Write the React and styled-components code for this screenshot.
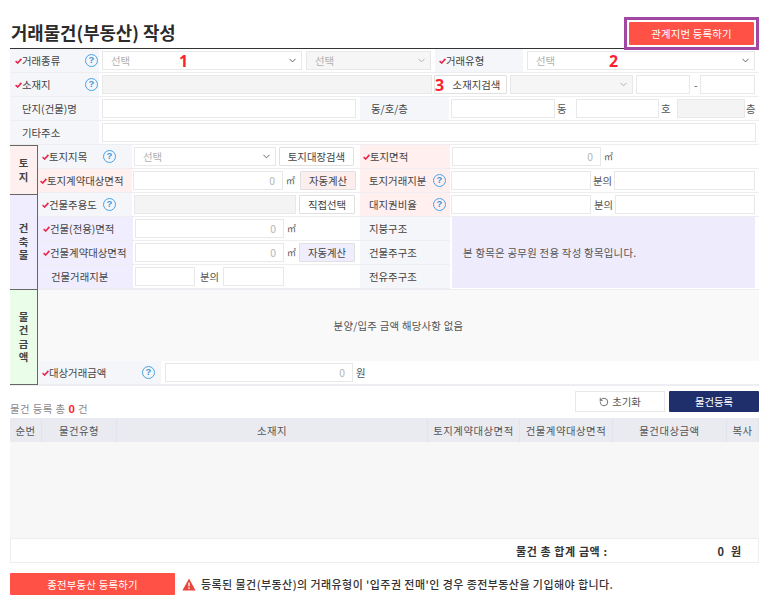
import React from "react";
import styled, { createGlobalStyle } from "styled-components";
import { ChevronDown, RotateCcw } from "lucide-react";

const Global = createGlobalStyle`
  html, body { margin: 0; padding: 0; background: #fff; }
  body { font-family: "Noto Sans CJK KR", "Noto Sans", sans-serif; font-size: 10.4px; color: #4a4a4a; }
  * { box-sizing: border-box; }
`;

const Page = styled.div`
  position: relative;
  width: 768px;
  height: 602px;
  padding: 0 9px 0 10px;
  overflow: hidden;
`;
const Header = styled.header`
  height: 49px;
  display: flex;
  align-items: flex-start;
  justify-content: space-between;
  border-bottom: 1px solid #333;
`;
const Title = styled.h1`
  margin: 21px 0 0 1px;
  font-size: 17.8px;
  line-height: 22px;
  font-weight: 700;
  color: #2b2b2b;
`;
const Highlight = styled.div`
  margin: 17px 0 0 0;
  width: 135px;
  height: 33px;
  border: 3px solid #a148a3;
  padding: 2px;
  background: #fff;
`;
const RedButton = styled.button`
  border: 0;
  padding: 0;
  font: inherit;
  color: #fff;
  background: #ff5145;
  border-radius: 1px;
  width: ${p => p.$w || "100%"};
  height: ${p => p.$h || "100%"};
  letter-spacing: 0.2px;
`;
const Row = styled.div`
  display: flex;
  align-items: center;
  height: ${p => p.$h || 24}px;
  border-bottom: 1px solid #eeeef2;
  background: ${p => p.$bg || "#fff"};
  flex: none;
`;
const Label = styled.div`
  position: relative;
  align-self: stretch;
  display: flex;
  align-items: center;
  flex: none;
  width: ${p => p.$w}px;
  padding-left: ${p => p.$pl ?? 12}px;
  background: ${p => p.$bg || "#f5f6fa"};
  margin-left: ${p => p.$ml || 0}px;
  margin-right: ${p => p.$mr ?? 2}px;
  white-space: nowrap;
  color: #444;
`;
const Check = styled.svg`
  width: 7px;
  height: 6px;
  margin-left: -7px;
  flex: none;
`;
const Req = () => (
  <Check viewBox="0 0 7 6"><path d="M.6 3.1 2.7 5 6.4.9" fill="none" stroke="#e8274b" strokeWidth="1.6" /></Check>
);
const HelpDot = styled.span`
  position: absolute;
  left: ${p => p.$x}px;
  top: 50%;
  margin-top: -6.5px;
  width: 13px;
  height: 13px;
  border-radius: 50%;
  border: 1.3px solid #4aa3e2;
  color: #3d96d8;
  font: 700 9.5px/10.5px "Liberation Sans", sans-serif;
  text-align: center;
`;
const Help = ({ x }) => <HelpDot $x={x}>?</HelpDot>;
const Input = styled.div`
  flex: none;
  width: ${p => p.$w}px;
  height: ${p => p.$h || 19}px;
  margin-left: ${p => p.$ml || 0}px;
  background: ${p => (p.$off ? "#f4f4f4" : "#fff")};
  border: 1px solid #e8e8e8;
  color: #b5b5b5;
  text-align: right;
  padding-right: 7px;
  line-height: 18px;
`;
const Select = styled.div`
  flex: none;
  display: flex;
  align-items: center;
  justify-content: space-between;
  width: ${p => p.$w}px;
  height: 19px;
  margin-left: ${p => p.$ml || 0}px;
  padding: 0 3px 0 8px;
  background: ${p => (p.$off ? "#f6f6f6" : "#fff")};
  border: 1px solid #e8e8e8;
  color: #b0b0b0;
  svg { color: ${p => (p.$off ? "#aaa" : "#555")}; }
`;
const Btn = styled.button`
  flex: none;
  font: inherit;
  color: #444;
  padding: 0 0 0 ${p => p.$pl || 0}px;
  width: ${p => p.$w}px;
  height: 19px;
  margin-left: ${p => p.$ml || 0}px;
  background: ${p => p.$bg || "#fff"};
  border: 1px solid #e0e0e0;
  border-radius: 1px;
`;
const Unit = styled.span`
  flex: none;
  margin-left: ${p => p.$ml || 0}px;
  width: ${p => p.$w || "auto"};
  color: #555;
  white-space: nowrap;
  font-size: ${p => p.$s || "10.4px"};
`;
const Body = styled.div`
  display: flex;
  height: 241px;
  border-bottom: 1px solid #eeeef2;
`;
const Tabs = styled.div`
  flex: none;
  width: 28px;
  display: flex;
  flex-direction: column;
  border-right: 1px solid #666;
  border-bottom: 1px solid #666;
`;
const Tab = styled.div`
  height: ${p => p.$h}px;
  display: flex;
  align-items: center;
  justify-content: center;
  text-align: center;
  font-weight: 700;
  line-height: 13.5px;
  color: #444;
  background: ${p => p.$bg};
  border-top: 1px solid #666;
`;
const Main = styled.div`
  flex: 1;
  display: flex;
  flex-direction: column;
`;
const Half = styled.div`
  display: flex;
  align-items: center;
  align-self: stretch;
  flex: none;
  width: ${p => p.$w}px;
`;
const Split = styled.div`
  display: flex;
  height: 72px;
`;
const Stack = styled.div`
  flex: none;
  width: ${p => p.$w}px;
  display: flex;
  flex-direction: column;
`;
const Notice = styled.div`
  flex: 1;
  margin: 0 4px 1px 2px;
  background: #eeebfc;
  display: flex;
  align-items: center;
  padding-left: 11px;
  color: #555;
  letter-spacing: 0.27px;
`;
const Empty = styled.div`
  height: 72px;
  display: flex;
  align-items: center;
  justify-content: center;
  background: #f9f9f9;
  border-top: 1px solid #eeeef2;
  color: #555;
  letter-spacing: 0.25px;
`;
const Actions = styled.div`
  display: flex;
  justify-content: flex-end;
  gap: 4px;
  margin-top: 5px;
  height: 21px;
`;
const GhostBtn = styled.button`
  width: 90px;
  padding: 0;
  font: inherit;
  color: #555;
  background: #fff;
  border: 1px solid #e8e8e8;
  display: flex;
  align-items: center;
  justify-content: center;
  gap: 3px;
`;
const NavyBtn = styled.button`
  width: 90px;
  padding: 0;
  font: inherit;
  color: #fff;
  background: #1f2f6b;
  border: 0;
  border-radius: 1px;
`;
const Count = styled.div`
  height: 16px;
  margin-top: -10px;
  color: #8a8a8a;
  line-height: 13px;
  letter-spacing: 0.45px;
  b { color: #ff1f2e; font-size: 11.5px; font-family: "Liberation Sans", sans-serif; }
`;
const TableHead = styled.div`
  display: grid;
  grid-template-columns: 32px 75px 311px 92px 93px 114px 32px;
  height: 24px;
  background: #e9ebf1;
`;
const Th = styled.div`
  display: flex;
  align-items: center;
  justify-content: center;
  color: #555;
  border-right: 1px solid #e2e4eb;
  white-space: nowrap;
  letter-spacing: 0.5px;
`;
const TableBody = styled.div`
  height: 97px;
  background: #f7f7f7;
  border-bottom: 1px solid #eee;
`;
const TotalRow = styled.div`
  height: 24px;
  display: flex;
  align-items: center;
  border: 1px solid #eee;
  border-top: 0;
  font-weight: 700;
  font-size: 11px;
  letter-spacing: 0.6px;
  color: #333;
  padding-left: 505px;
`;
const TotalValue = styled.span`
  margin-left: 110px;
  white-space: pre;
`;
const Footer = styled.div`
  display: flex;
  align-items: center;
  margin-top: 10px;
  height: 22px;
`;
const Warn = styled.div`
  display: flex;
  align-items: center;
  gap: 5px;
  margin-left: 7px;
  font-weight: 500;
  font-size: 11px;
  color: #333;
  letter-spacing: 0.43px;
  white-space: nowrap;
`;
const Mark = styled.span`
  position: absolute;
  left: ${p => p.$x}px;
  top: ${p => p.$y}px;
  color: #ff1f2e;
  font: 700 16px/16px "Noto Sans", sans-serif;
`;

export default function App() {
  return (
    <Page>
      <Global />
      <Header>
        <Title>거래물건(부동산) 작성</Title>
        <Highlight><RedButton>관계지번 등록하기</RedButton></Highlight>
      </Header>

      <Row>
        <Label $w={89} $mr={3}><Req />거래종류<Help x={75} /></Label>
        <Select $w={200}>선택<ChevronDown size={11} /></Select>
        <Select $w={125} $ml={4} $off>선택<ChevronDown size={11} /></Select>
        <Label $w={88} $ml={4} $mr={4} $pl={11}><Req />거래유형</Label>
        <Select $w={228}>선택<ChevronDown size={11} /></Select>
      </Row>
      <Row>
        <Label $w={89} $mr={3}><Req />소재지<Help x={75} /></Label>
        <Input $w={330} $off />
        <Btn $w={73} $ml={2} $pl={12}>소재지검색</Btn>
        <Select $w={123} $ml={3} $off><span /><ChevronDown size={11} /></Select>
        <Input $w={54} $ml={3} />
        <Unit $ml={4} $w="6px">-</Unit>
        <Input $w={55} />
      </Row>
      <Row>
        <Label $w={89} $mr={3}>단지(건물)명</Label>
        <Input $w={254} />
        <Label $w={89} $ml={4} $pl={11}>동/호/층</Label>
        <Input $w={104} />
        <Unit $ml={2} $w="19px">동</Unit>
        <Input $w={83} />
        <Unit $ml={2} $w="16px">호</Unit>
        <Input $w={68} $off />
        <Unit $ml={1}>층</Unit>
      </Row>
      <Row>
        <Label $w={89} $mr={3}>기타주소</Label>
        <Input $w={654} />
      </Row>

      <Body>
        <Tabs>
          <Tab $h={49} $bg="#fff0f0">토<br />지</Tab>
          <Tab $h={96} $bg="#f0eefe">건<br />축<br />물</Tab>
          <Tab $h={96} $bg="#eafde9">물<br />건<br />금<br />액</Tab>
        </Tabs>
        <Main>
          <Row>
            <Half $w={322}>
              <Label $w={94} $pl={11}><Req />토지지목<Help x={65} /></Label>
              <Select $w={142}>선택<ChevronDown size={11} /></Select>
              <Btn $w={75} $ml={3}>토지대장검색</Btn>
            </Half>
            <Label $w={90} $bg="#ffefef" $pl={10}><Req />토지면적</Label>
            <Input $w={149}>0</Input>
            <Unit $ml={3} $s="9px">㎡</Unit>
          </Row>
          <Row>
            <Half $w={322}>
              <Label $w={94} $mr={1} $bg="#ffefef" $pl={9}><Req />토지계약대상면적</Label>
              <Input $w={150}>0</Input>
              <Unit $ml={3} $w="14px" $s="9px">㎡</Unit>
              <Btn $w={56} $bg="#fdeeee">자동계산</Btn>
            </Half>
            <Label $w={90} $mr={1} $bg="#ffefef" $pl={9}>토지거래지분<Help x={73} /></Label>
            <Input $w={140} />
            <Unit $ml={2} $w="21px">분의</Unit>
            <Input $w={141} />
          </Row>
          <Row>
            <Half $w={322}>
              <Label $w={94} $pl={11}><Req />건물주용도<Help x={65} /></Label>
              <Input $w={162} $off />
              <Btn $w={56} $ml={3}>직접선택</Btn>
            </Half>
            <Label $w={90} $mr={1} $bg="#ffefef" $pl={9}>대지권비율<Help x={73} /></Label>
            <Input $w={140} />
            <Unit $ml={3} $w="21px">분의</Unit>
            <Input $w={140} />
          </Row>
          <Split>
            <Stack $w={322}>
              <Row>
                <Label $w={95} $bg="#f0eefe" $pl={12}><Req />건물(전용)면적</Label>
                <Input $w={149}>0</Input>
                <Unit $ml={3} $s="9px">㎡</Unit>
              </Row>
              <Row>
                <Label $w={95} $bg="#f0eefe" $pl={12}><Req />건물계약대상면적</Label>
                <Input $w={149}>0</Input>
                <Unit $ml={3} $w="12px" $s="9px">㎡</Unit>
                <Btn $w={56} $bg="#f0eefe">자동계산</Btn>
              </Row>
              <Row>
                <Label $w={95} $bg="#f0eefe" $pl={13}>건물거래지분</Label>
                <Input $w={60} />
                <Unit $ml={5} $w="23px">분의</Unit>
                <Input $w={61} />
              </Row>
            </Stack>
            <Stack $w={90}>
              <Row><Label $w={90} $mr={0} $pl={9}>지붕구조</Label></Row>
              <Row><Label $w={90} $mr={0} $pl={9}>건물주구조</Label></Row>
              <Row><Label $w={90} $mr={0} $pl={9}>전유주구조</Label></Row>
            </Stack>
            <Notice>본 항목은 공무원 전용 작성 항목입니다.</Notice>
          </Split>
          <Empty>분양/입주 금액 해당사항 없음</Empty>
          <Row>
            <Label $w={123} $pl={11} $mr={4}><Req />대상거래금액<Help x={104} /></Label>
            <Input $w={188}>0</Input>
            <Unit $ml={3}>원</Unit>
          </Row>
        </Main>
      </Body>

      <Actions>
        <GhostBtn><RotateCcw size={10} />초기화</GhostBtn>
        <NavyBtn>물건등록</NavyBtn>
      </Actions>
      <Count>물건 등록 총 <b>0</b> 건</Count>
      <TableHead>
        <Th>순번</Th><Th>물건유형</Th><Th>소재지</Th><Th>토지계약대상면적</Th><Th>건물계약대상면적</Th><Th>물건대상금액</Th><Th>복사</Th>
      </TableHead>
      <TableBody />
      <TotalRow>물건 총 합계 금액 :<TotalValue>0  원</TotalValue></TotalRow>
      <Footer>
        <RedButton $w="165px">종전부동산 등록하기</RedButton>
        <Warn>
          <svg width="14" height="13" viewBox="0 0 14 13">
            <path d="M7 .5 13.6 12.5H.4Z" fill="#e9473c" />
            <path d="M7 4.5v4M7 9.6v1.4" stroke="#fff" strokeWidth="1.3" />
          </svg>
          등록된 물건(부동산)의 거래유형이 '입주권 전매'인 경우 종전부동산을 기입해야 합니다.
        </Warn>
      </Footer>

      <Mark $x={179} $y={53}>1</Mark>
      <Mark $x={609} $y={53}>2</Mark>
      <Mark $x={435} $y={77}>3</Mark>
    </Page>
  );
}
